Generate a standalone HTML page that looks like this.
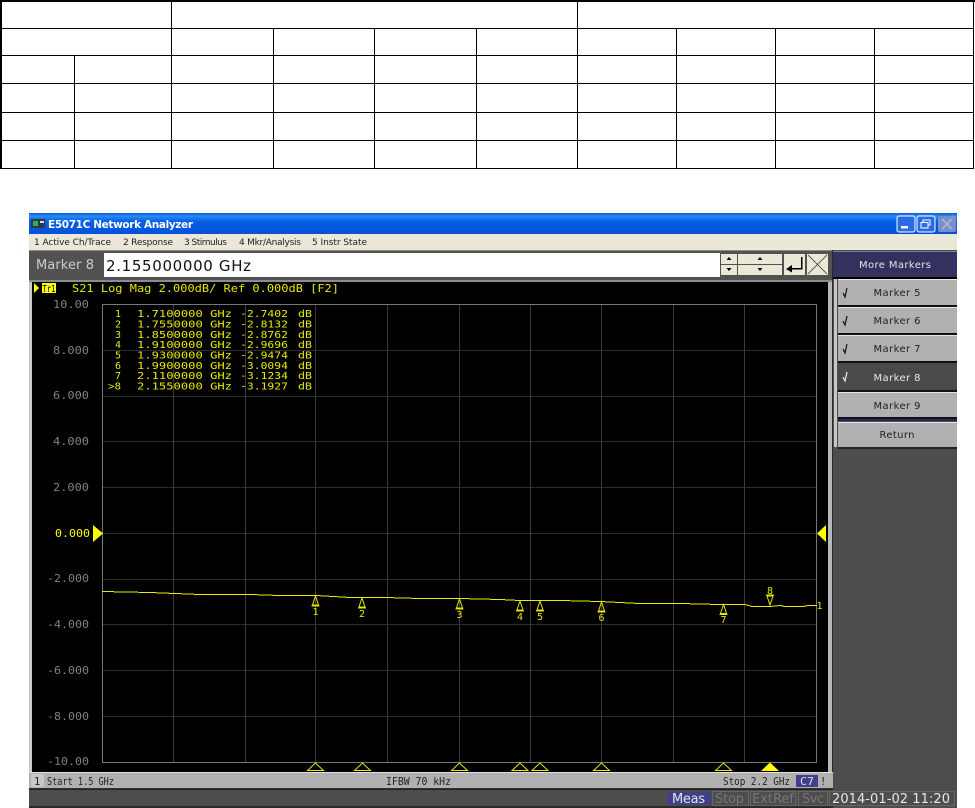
<!DOCTYPE html>
<html><head><meta charset="utf-8"><style>
html,body{margin:0;padding:0;background:#fff;width:975px;height:808px;overflow:hidden}
svg{display:block}
.m{font-family:"DejaVu Sans Mono","Liberation Mono",monospace}
.s{font-family:"DejaVu Sans","Liberation Sans",sans-serif}
</style></head><body>
<svg width="975" height="808" viewBox="0 0 975 808" xmlns="http://www.w3.org/2000/svg">
<defs>
<linearGradient id="tb" x1="0" y1="0" x2="0" y2="1"><stop offset="0" stop-color="#0a5be0"/><stop offset=".15" stop-color="#2a8cf5"/><stop offset=".4" stop-color="#0560e6"/><stop offset="1" stop-color="#0450d8"/></linearGradient>
</defs>
<!-- table -->
<g fill="#000" shape-rendering="crispEdges">
<rect x="0" y="0" width="975" height="2"/>
<rect x="0" y="0" width="2" height="169"/>
<rect x="0" y="28" width="974" height="1"/>
<rect x="0" y="55" width="974" height="1"/>
<rect x="0" y="83" width="974" height="1"/>
<rect x="0" y="112" width="974" height="1"/>
<rect x="0" y="140" width="974" height="1"/>
<rect x="0" y="168" width="974" height="1"/>
<rect x="74" y="55" width="1" height="113"/>
<rect x="171" y="0" width="1" height="168"/>
<rect x="273" y="28" width="1" height="140"/>
<rect x="374" y="28" width="1" height="140"/>
<rect x="476" y="28" width="1" height="140"/>
<rect x="577" y="0" width="1" height="168"/>
<rect x="676" y="28" width="1" height="140"/>
<rect x="775" y="28" width="1" height="140"/>
<rect x="874" y="28" width="1" height="140"/>
<rect x="973" y="0" width="1" height="169"/>
</g>
<!-- window -->
<g shape-rendering="crispEdges">
<rect x="29" y="213" width="928" height="595" fill="#4d4d4d"/>
<rect x="29" y="213" width="928" height="21" fill="url(#tb)"/>
<rect x="29" y="234" width="928" height="16" fill="#ebe8d8"/>
<rect x="29" y="250" width="804" height="31" fill="#525252"/>
<rect x="29" y="250" width="804" height="1" fill="#8a8a8a"/>
<rect x="104" y="253" width="616" height="24" fill="#fff"/>
<rect x="29" y="280" width="804" height="2" fill="#8c8c8c"/>
<rect x="29" y="282" width="3" height="490" fill="#c8c8c8"/>
<rect x="828" y="282" width="4" height="490" fill="#b8b8b8"/>
<rect x="832" y="250" width="1" height="540" fill="#2a2a2a"/>
<rect x="32" y="282" width="796" height="490" fill="#000"/>
<rect x="29" y="772" width="804" height="16" fill="#b0b0b0"/>
<rect x="29" y="772" width="804" height="1" fill="#e0e0e0"/>
<rect x="29" y="788" width="804" height="2" fill="#333"/>
<rect x="29" y="790" width="928" height="18" fill="#4d4d4d"/>
<rect x="29" y="789" width="928" height="1" fill="#222"/>
<rect x="29" y="806" width="928" height="2" fill="#2a2a2a"/>
</g>
<!-- title bar -->
<g shape-rendering="crispEdges">
<rect x="31" y="219" width="14" height="9" fill="#2f3a3a"/><rect x="33" y="221" width="5" height="5" fill="#2fae5a"/><rect x="40" y="221" width="4" height="2" fill="#ddd"/>
</g>
<text x="48" y="228" class="s" font-size="10.5" font-weight="700" fill="#fff" textLength="145">E5071C Network Analyzer</text>
<g>
<rect x="897" y="216" width="18" height="16" rx="2" fill="#2a6ce8" stroke="#fff"/>
<rect x="901" y="226" width="7" height="2.5" fill="#fff"/>
<rect x="917" y="216" width="18" height="16" rx="2" fill="#2a6ce8" stroke="#fff"/>
<rect x="923" y="220" width="7" height="5" fill="none" stroke="#fff"/><rect x="921" y="222.5" width="7" height="5.5" fill="#2a6ce8" stroke="#fff"/>
<rect x="938" y="216" width="18" height="16" rx="2" fill="#7b8ec8"/>
<path d="M942 219l10 10M952 219l-10 10" stroke="#a8b4dc" stroke-width="1.6"/>
</g>
<g class="s" font-size="9" fill="#222">
<text x="34" y="245" textLength="77">1 Active Ch/Trace</text>
<text x="123" y="245" textLength="50">2 Response</text>
<text x="184" y="245" textLength="43">3 Stimulus</text>
<text x="239" y="245" textLength="62">4 Mkr/Analysis</text>
<text x="312" y="245" textLength="55">5 Instr State</text>
</g>
<text x="36" y="269" class="s" font-size="13" fill="#ccc" textLength="58">Marker 8</text>
<text x="106" y="271" class="s" font-size="15" fill="#111" textLength="145">2.155000000 GHz</text>
<!-- entry buttons -->
<g shape-rendering="crispEdges" fill="#ebe8d8">
<rect x="721" y="254" width="16" height="10"/><rect x="721" y="265" width="16" height="10"/>
<rect x="738" y="254" width="44" height="10"/><rect x="738" y="265" width="44" height="10"/>
<rect x="784" y="254" width="21" height="21"/><rect x="807" y="254" width="21" height="21"/>
</g>
<g fill="#000">
<path d="M726.500 260l2.500-3 2.500 3z"/><path d="M726.500 268l2.500 3 2.500-3z"/>
<path d="M757.500 260l2.500-3 2.500 3z"/><path d="M757.500 268l2.500 3 2.500-3z"/>
<path d="M786 269l6-4v3h9v-11h1.500v12.500H792v3z"/>
</g>
<path d="M808 255l19 19M827 255l-19 19" stroke="#333" stroke-width=".8"/>
<!-- header of chart -->
<path d="M34 283l5 5-5 5z" fill="#ff0"/>
<rect x="42" y="283" width="14" height="10" fill="#ff0"/>
<text x="42.500" y="292" class="m" font-size="10" fill="#000" textLength="13" lengthAdjust="spacingAndGlyphs">Tr1</text>
<text x="72" y="292" class="m" font-size="10.500" fill="#e6e600" textLength="267" lengthAdjust="spacingAndGlyphs">S21 Log Mag 2.000dB/ Ref 0.000dB [F2]</text>
<!-- grid -->
<g stroke="#2c2c2c" stroke-width="1" shape-rendering="crispEdges">
<path d="M102 350.500H817M102 396.500H817M102 441.500H817M102 487.500H817M102 533.500H817M102 579.500H817M102 624.500H817M102 670.500H817M102 716.500H817"/>
</g>
<g stroke="#3c3c3c" stroke-width="1" shape-rendering="crispEdges">
<path d="M173.500 304V762M245.500 304V762M315.500 304V762M387.500 304V762M459.500 304V762M530.500 304V762M601.500 304V762M673.500 304V762M744.500 304V762"/>
</g>
<rect x="102.500" y="304.500" width="714" height="458" fill="none" stroke="#777" shape-rendering="crispEdges"/>
<!-- y labels -->
<g class="m" font-size="10.500" fill="#808080">
<text x="53" y="308" textLength="36" lengthAdjust="spacingAndGlyphs">10.00</text>
<text x="53" y="354" textLength="36" lengthAdjust="spacingAndGlyphs">8.000</text>
<text x="53" y="399" textLength="36" lengthAdjust="spacingAndGlyphs">6.000</text>
<text x="53" y="445" textLength="36" lengthAdjust="spacingAndGlyphs">4.000</text>
<text x="53" y="491" textLength="36" lengthAdjust="spacingAndGlyphs">2.000</text>
<text x="47" y="582" textLength="42" lengthAdjust="spacingAndGlyphs">-2.000</text>
<text x="47" y="628" textLength="42" lengthAdjust="spacingAndGlyphs">-4.000</text>
<text x="47" y="674" textLength="42" lengthAdjust="spacingAndGlyphs">-6.000</text>
<text x="47" y="720" textLength="42" lengthAdjust="spacingAndGlyphs">-8.000</text>
<text x="47" y="765" textLength="42" lengthAdjust="spacingAndGlyphs">-10.00</text>
</g>
<text x="55" y="537" class="m" font-size="10.500" fill="#ff0" textLength="35" lengthAdjust="spacingAndGlyphs">0.000</text>
<path d="M93 525l10 8.500-10 8.500z" fill="#ff0"/>
<path d="M826 525l-9 8.500 9 8.500z" fill="#ff0"/>
<!-- marker table -->
<g class="m" font-size="10" fill="#e8e800">
<text x="115" y="317">1</text><text x="137" y="317" textLength="95" lengthAdjust="spacingAndGlyphs">1.7100000 GHz</text><text x="240" y="317" textLength="48" lengthAdjust="spacingAndGlyphs">-2.7402</text><text x="298" y="317" textLength="14" lengthAdjust="spacingAndGlyphs">dB</text>
<text x="115" y="327.500">2</text><text x="137" y="327.500" textLength="95" lengthAdjust="spacingAndGlyphs">1.7550000 GHz</text><text x="240" y="327.500" textLength="48" lengthAdjust="spacingAndGlyphs">-2.8132</text><text x="298" y="327.500" textLength="14" lengthAdjust="spacingAndGlyphs">dB</text>
<text x="115" y="338">3</text><text x="137" y="338" textLength="95" lengthAdjust="spacingAndGlyphs">1.8500000 GHz</text><text x="240" y="338" textLength="48" lengthAdjust="spacingAndGlyphs">-2.8762</text><text x="298" y="338" textLength="14" lengthAdjust="spacingAndGlyphs">dB</text>
<text x="115" y="348">4</text><text x="137" y="348" textLength="95" lengthAdjust="spacingAndGlyphs">1.9100000 GHz</text><text x="240" y="348" textLength="48" lengthAdjust="spacingAndGlyphs">-2.9696</text><text x="298" y="348" textLength="14" lengthAdjust="spacingAndGlyphs">dB</text>
<text x="115" y="358.500">5</text><text x="137" y="358.500" textLength="95" lengthAdjust="spacingAndGlyphs">1.9300000 GHz</text><text x="240" y="358.500" textLength="48" lengthAdjust="spacingAndGlyphs">-2.9474</text><text x="298" y="358.500" textLength="14" lengthAdjust="spacingAndGlyphs">dB</text>
<text x="115" y="369">6</text><text x="137" y="369" textLength="95" lengthAdjust="spacingAndGlyphs">1.9900000 GHz</text><text x="240" y="369" textLength="48" lengthAdjust="spacingAndGlyphs">-3.0094</text><text x="298" y="369" textLength="14" lengthAdjust="spacingAndGlyphs">dB</text>
<text x="115" y="379">7</text><text x="137" y="379" textLength="95" lengthAdjust="spacingAndGlyphs">2.1100000 GHz</text><text x="240" y="379" textLength="48" lengthAdjust="spacingAndGlyphs">-3.1234</text><text x="298" y="379" textLength="14" lengthAdjust="spacingAndGlyphs">dB</text>
<text x="108" y="389.500" textLength="13" lengthAdjust="spacingAndGlyphs">&gt;8</text><text x="137" y="389.500" textLength="95" lengthAdjust="spacingAndGlyphs">2.1550000 GHz</text><text x="240" y="389.500" textLength="48" lengthAdjust="spacingAndGlyphs">-3.1927</text><text x="298" y="389.500" textLength="14" lengthAdjust="spacingAndGlyphs">dB</text>
</g>
<!-- trace -->
<polyline fill="none" stroke="#ecec00" stroke-width="1" shape-rendering="crispEdges" points="102,591.500 150,592.500 200,594.500 250,594.500 280,595.500 316,595.500 350,597.500 385,597.500 420,598.500 459,598.500 500,599.500 520,600.500 560,600.500 600,601.500 620,602.500 640,603.500 680,603.500 720,604.500 745,604.500 752,606.500 770,606.500 780,605.500 785,606.500 803,606.500 808,605.500 817,605.500"/>
<!-- markers on trace -->
<g fill="none" stroke="#e6e600" stroke-width="1">
<path d="M315.500 596l-3 9h6zM311.500 606h8"/>
<path d="M362 598l-3 9h6zM358 608h8"/>
<path d="M459.500 599l-3 9h6zM455.500 609h8"/>
<path d="M520 601l-3 9h6zM516 611h8"/>
<path d="M540 601l-3 9h6zM536 611h8"/>
<path d="M601.500 602l-3 9h6zM597.500 612h8"/>
<path d="M723.500 604.500l-3 9h6zM719.500 614.500h8"/>
<path d="M770 605l-3-9h6zM766 595h8"/>
</g>
<g class="m" font-size="10" fill="#e6e600" text-anchor="middle">
<text x="315.500" y="615">1</text><text x="362" y="617">2</text><text x="459.500" y="618">3</text>
<text x="520" y="620">4</text><text x="540" y="620">5</text><text x="601.500" y="621">6</text>
<text x="723.500" y="623">7</text><text x="770" y="594">8</text>
<text x="819.500" y="609">1</text>
</g>
<!-- bottom triangles -->
<g fill="none" stroke="#e6e600" stroke-width="1">
<path d="M315.500 763l-8 7.500h16z"/><path d="M362.500 763l-8 7.500h16z"/><path d="M459.500 763l-8 7.500h16z"/>
<path d="M520 763l-8 7.500h16z"/><path d="M540 763l-8 7.500h16z"/><path d="M601.500 763l-8 7.500h16z"/><path d="M723.500 763l-8 7.500h16z"/>
</g>
<path d="M770 762.500l-9 8.500h18z" fill="#ff0"/>
<!-- status -->
<rect x="31" y="774" width="13" height="13" fill="#c8c8c8" shape-rendering="crispEdges"/>
<g class="m" font-size="10.500" fill="#222">
<text x="34" y="785">1</text>
<text x="47" y="785" textLength="67" lengthAdjust="spacingAndGlyphs">Start 1.5 GHz</text>
<text x="386" y="785" textLength="65" lengthAdjust="spacingAndGlyphs">IFBW 70 kHz</text>
<text x="723" y="785" textLength="67" lengthAdjust="spacingAndGlyphs">Stop 2.2 GHz</text>
<text x="820" y="785">!</text>
</g>
<rect x="796" y="775" width="22" height="12" fill="#3f3f8c" shape-rendering="crispEdges"/>
<text x="800" y="785" class="m" font-size="10.500" fill="#ddd" textLength="14" lengthAdjust="spacingAndGlyphs">C7</text>
<!-- right panel -->
<g shape-rendering="crispEdges">
<rect x="833" y="250" width="124" height="558" fill="#4d4d4d"/>
<rect x="833" y="251" width="124" height="26" fill="#33325f"/>
<rect x="833" y="251" width="124" height="1" fill="#7a7ab0"/>
<rect x="833" y="277" width="124" height="2" fill="#000"/>
<rect x="834" y="279" width="3" height="168" fill="#c8c8c0"/>
<rect x="838" y="279" width="119" height="26" fill="#b0b0b0"/>
<rect x="838" y="307" width="119" height="26" fill="#b0b0b0"/>
<rect x="838" y="335" width="119" height="26" fill="#b0b0b0"/>
<rect x="838" y="363" width="119" height="27" fill="#4a4a4a"/>
<rect x="838" y="392" width="119" height="25" fill="#b0b0b0"/>
<rect x="838" y="419" width="119" height="2" fill="#26265e"/>
<rect x="838" y="422" width="119" height="25" fill="#b0b0b0"/>
<rect x="838" y="279" width="119" height="1" fill="#e4e4e4"/><rect x="838" y="307" width="119" height="1" fill="#e4e4e4"/><rect x="838" y="335" width="119" height="1" fill="#e4e4e4"/><rect x="838" y="392" width="119" height="1" fill="#e4e4e4"/><rect x="838" y="422" width="119" height="1" fill="#e4e4e4"/>
<rect x="838" y="305" width="119" height="2" fill="#111"/><rect x="838" y="333" width="119" height="2" fill="#111"/><rect x="838" y="361" width="119" height="2" fill="#111"/><rect x="838" y="390" width="119" height="2" fill="#111"/><rect x="838" y="417" width="119" height="2" fill="#111"/><rect x="838" y="447" width="119" height="2" fill="#222"/>
</g>
<g class="s" font-size="10" text-anchor="middle" fill="#222">
<text x="895" y="268" fill="#e4e4e4" textLength="72">More Markers</text>
<text x="897" y="296" textLength="47">Marker 5</text>
<text x="897" y="324" textLength="47">Marker 6</text>
<text x="897" y="352" textLength="47">Marker 7</text>
<text x="897" y="381" fill="#e8e8e8" textLength="47">Marker 8</text>
<text x="897" y="409" textLength="47">Marker 9</text>
<text x="897" y="438" textLength="35">Return</text>
</g>
<g fill="none" stroke="#111" stroke-width="1.200">
<path d="M843 293l2 4 2-9"/><path d="M843 321l2 4 2-9"/><path d="M843 349l2 4 2-9"/>
<path d="M843 377l2 4 2-9" stroke="#eee"/>
</g>
<!-- bottom bar -->
<g shape-rendering="crispEdges">
<rect x="668" y="792" width="43" height="13" fill="#3f3f8c"/>
<g fill="none" stroke="#666"><rect x="712.500" y="791.500" width="36" height="14"/><rect x="750.500" y="791.500" width="45" height="14"/><rect x="798.500" y="791.500" width="29" height="14"/><rect x="829.500" y="791.500" width="125" height="14"/></g>
</g>
<g class="s" font-size="13">
<text x="672" y="803" fill="#e4e4e4" textLength="33">Meas</text>
<text x="715" y="803" fill="#777" textLength="29">Stop</text>
<text x="752" y="803" fill="#777" textLength="42">ExtRef</text>
<text x="802" y="803" fill="#777" textLength="22">Svc</text>
<text x="832" y="803" fill="#e8e8e8" textLength="118">2014-01-02 11:20</text>
</g>
</svg>
</body></html>
